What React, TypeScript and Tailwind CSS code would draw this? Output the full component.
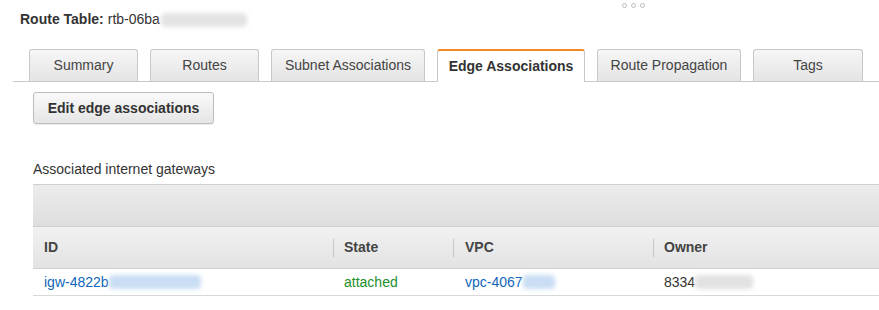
const tabs = [
  { label: 'Summary', w: 'w-[109px]' },
  { label: 'Routes', w: 'w-[109px]' },
  { label: 'Subnet Associations', w: 'w-[154px]' },
  { label: 'Edge Associations', w: 'w-[148px]', active: true },
  { label: 'Route Propagation', w: 'w-[144px]' },
  { label: 'Tags', w: 'w-[110px]' },
];

function Blur({ className }: { className: string }) {
  return <span className={`inline-block h-[14px] rounded-sm blur-[2px] ${className}`} />;
}

export default function App() {
  return (
    <div className="relative h-[310px] w-[879px] overflow-hidden bg-white font-['Liberation_Sans',Arial,sans-serif] text-[14px] text-[#222]">
      {/* resize handle */}
      <div className="absolute left-[622px] top-[3px] flex gap-[4px]">
        <span className="h-[5px] w-[5px] rounded-full border border-[#bbb]" />
        <span className="h-[5px] w-[5px] rounded-full border border-[#bbb]" />
        <span className="h-[5px] w-[5px] rounded-full border border-[#bbb]" />
      </div>

      {/* Title */}
      <div className="flex h-[38px] items-center pl-[20px] pt-[1px]">
        <span className="font-bold text-[#333]">Route Table:</span>
        <span className="ml-[4px] text-[#333]">rtb-06ba</span>
        <Blur className="ml-[1px] w-[86px] bg-[#e4e4e4]" />
      </div>

      {/* Tabs */}
      <div className="ml-[13px] mt-[11px] flex h-[33px] items-end gap-[12px] border-b border-[#c8c8c8] pl-[16px]">
        {tabs.map((t) =>
          t.active ? (
            <div
              key={t.label}
              className={`${t.w} -mb-px flex h-[33px] items-center justify-center rounded-t-[3px] border-x border-t-2 border-x-[#c8c8c8] border-t-[#f08a24] bg-white font-bold text-[#333]`}
            >
              {t.label}
            </div>
          ) : (
            <div
              key={t.label}
              className={`${t.w} flex h-[32px] items-center justify-center rounded-t-[3px] border-x border-t border-[#c8c8c8] bg-gradient-to-b from-[#f6f6f6] to-[#e4e4e4] text-[#444]`}
            >
              {t.label}
            </div>
          ),
        )}
      </div>

      {/* Button */}
      <div className="ml-[33px] mt-[10px]">
        <button className="flex h-[32px] w-[181px] items-center justify-center rounded-[3px] border border-[#bdbdbd] bg-gradient-to-b from-[#fafafa] to-[#e5e5e5] font-bold text-[#333] shadow-[0_1px_1px_rgba(0,0,0,0.08)]">
          Edit edge associations
        </button>
      </div>

      {/* Section */}
      <div className="ml-[33px] mt-[35px] text-[#333]">Associated internet gateways</div>

      <div className="ml-[33px] mt-[4px] border-t border-[#cfcfcf]">
        <div className="h-[42px] border-b border-[#cfcfcf] bg-gradient-to-b from-[#ececec] to-[#dedede]" />
        <div className="grid h-[42px] grid-cols-[300px_120px_200px_1fr] items-center border-b border-[#d0d0d0] bg-gradient-to-b from-[#f1f1f1] to-[#e3e3e3] font-bold text-[#444]">
          <div className="pl-[11px]">ID</div>
          <div className="flex items-center pl-0">
            <span className="h-[18px] border-l border-[#c6c6c6]" />
            <span className="pl-[10px]">State</span>
          </div>
          <div className="flex items-center">
            <span className="h-[18px] border-l border-[#c6c6c6]" />
            <span className="pl-[11px]">VPC</span>
          </div>
          <div className="flex items-center">
            <span className="h-[18px] border-l border-[#c6c6c6]" />
            <span className="pl-[10px]">Owner</span>
          </div>
        </div>
        <div className="grid h-[27px] grid-cols-[300px_120px_200px_1fr] items-center border-b border-[#d8d8d8]">
          <div className="flex items-center pl-[11px]">
            <span className="text-[#1166bb]">igw-4822b</span>
            <Blur className="w-[92px] bg-[#c9def3]" />
          </div>
          <div className="pl-[11px] text-[#1d8f2c]">attached</div>
          <div className="flex items-center pl-[12px]">
            <span className="text-[#1166bb]">vpc-4067</span>
            <Blur className="w-[32px] bg-[#c9def3]" />
          </div>
          <div className="flex items-center pl-[11px]">
            <span className="text-[#333]">8334</span>
            <Blur className="w-[58px] bg-[#e2e2e2]" />
          </div>
        </div>
      </div>
    </div>
  );
}
